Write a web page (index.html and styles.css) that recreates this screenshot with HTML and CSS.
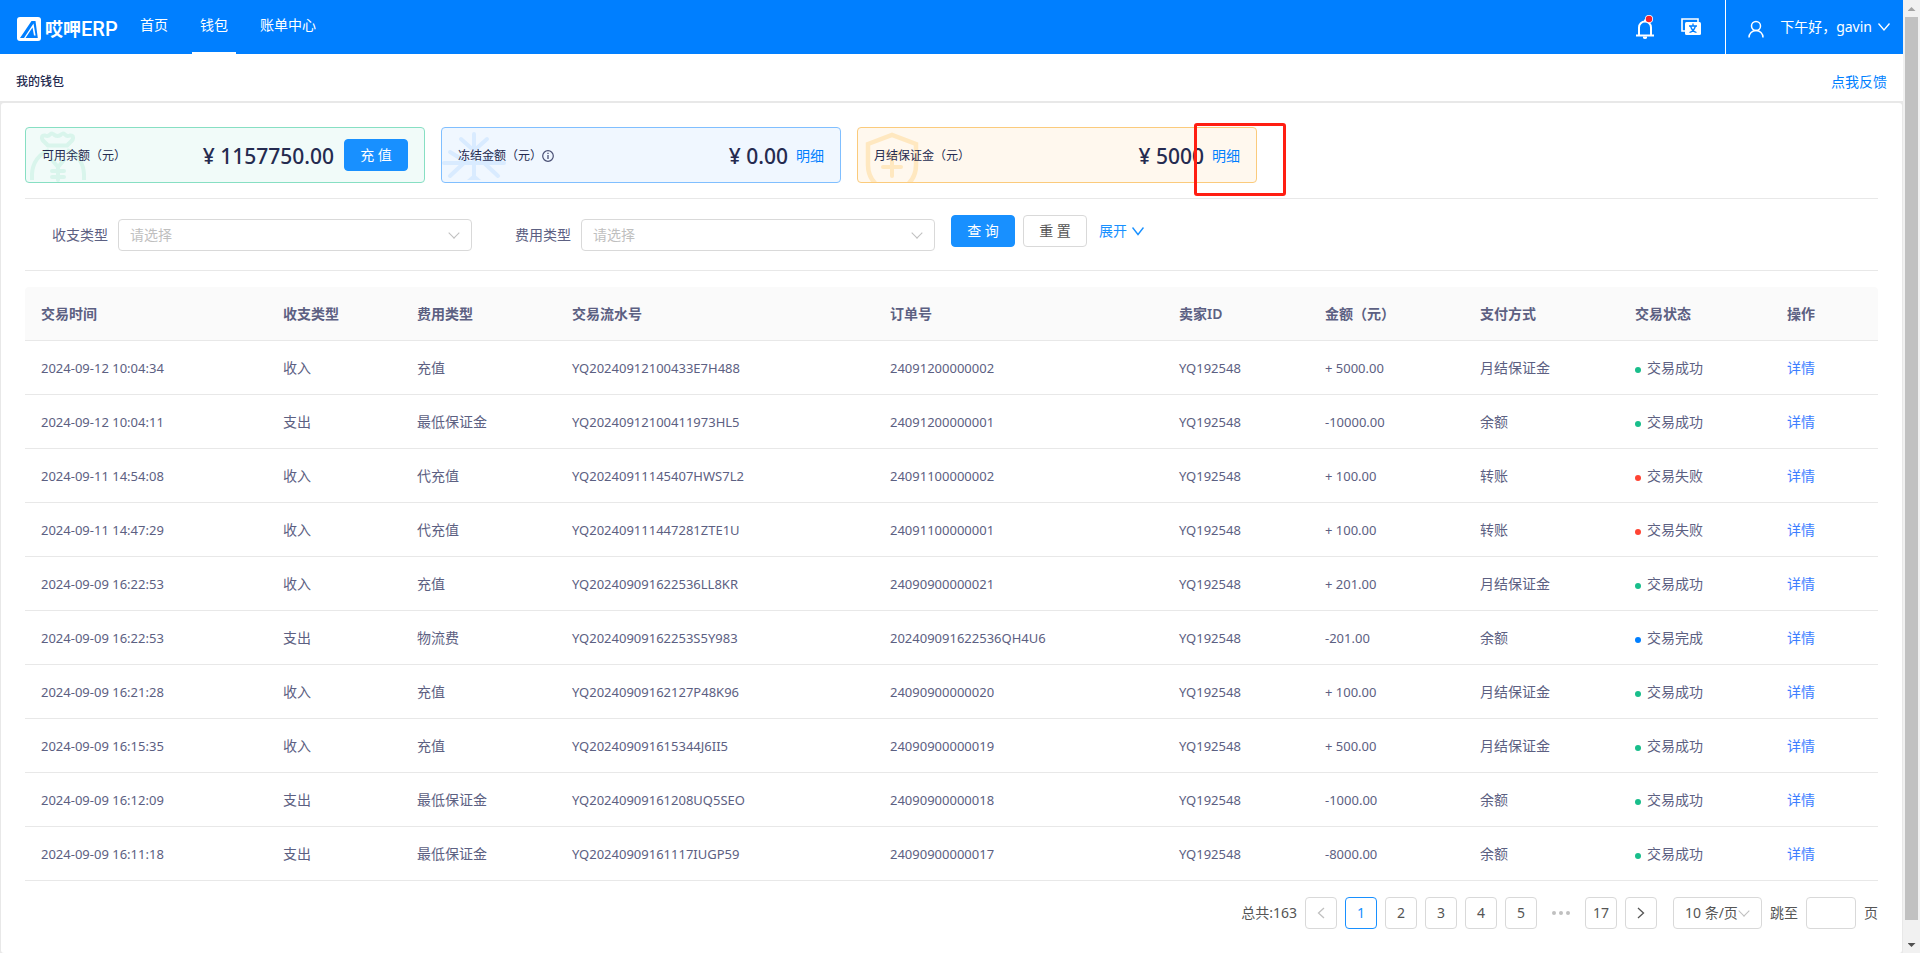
FILE: index.html
```html
<!DOCTYPE html>
<html lang="zh-CN">
<head>
<meta charset="utf-8">
<title>我的钱包</title>
<link rel="stylesheet" href="styles.css">
</head>
<body>
<div class="window">
<div class="app">
  <header class="topbar">
    <div class="logo">
      <svg class="logo-mark" viewBox="0 0 24 24" width="24" height="24"><rect width="24" height="24" rx="3" fill="#fff"/><path d="M3 21 14.500 4H18.500L20.800 21H8.500L15.500 10.500 17 18.500H18.600L16.500 6.500 7 21Z" fill="#007fff" fill-rule="evenodd"/></svg>
      <span class="logo-name">哎呷</span><span class="logo-erp">ERP</span>
    </div>
    <nav class="nav">
      <a class="nav-item" href="#">首页</a>
      <a class="nav-item nav-active" href="#">钱包</a>
      <a class="nav-item" href="#">账单中心</a>
    </nav>
    <div class="tools">
      <button class="tool" aria-label="通知"><svg width="20" height="24" viewBox="0 0 20 24"><path d="M1 20.500H19M4 20V12.500a6 6 0 0 1 12 0V20M10 6.500V4.500" fill="none" stroke="#fff" stroke-width="2"/><path d="M8 21.500h4v1a2 1.500 0 0 1-4 0z" fill="#fff"/><circle cx="14" cy="4" r="4" fill="#fff"/><circle cx="14" cy="4" r="3.200" fill="#f5222d"/></svg></button>
      <button class="tool" aria-label="切换语言"><svg width="20" height="18" viewBox="0 0 20 18"><path d="M4 13H1V1H17V4" fill="none" stroke="#fff" stroke-width="1.600"/><rect x="4" y="4" width="16" height="13" rx="1.500" fill="#fff"/><path d="M12 5.500V7.500M8 8H16M9.500 8C10.500 11.500 12.500 13.500 15.500 14.500M14.500 8C13.500 11.500 11.500 13.500 8.500 14.500" fill="none" stroke="#007fff" stroke-width="1.300"/></svg></button>
    </div>
    <button class="user">
      <svg width="16" height="18" viewBox="0 0 16 18"><circle cx="8" cy="6" r="4.500" fill="none" stroke="#fff" stroke-width="1.500"/><path d="M1 17.500a7 7 0 0 1 14 0" fill="none" stroke="#fff" stroke-width="1.500"/></svg>
      <span class="user-name">下午好，gavin</span>
      <svg class="user-arrow" width="12" height="8" viewBox="0 0 12 8"><path d="M.5.5 6 7 11.500.5" fill="none" stroke="#fff" stroke-width="1.300"/></svg>
    </button>
  </header>
  <div class="crumbs"><h1 class="page-title">我的钱包</h1><a class="feedback" href="#">点我反馈</a></div>
  <main class="panel">
    <section class="cards">
      <div class="card card-green">
        <svg class="card-art" width="64" height="54" viewBox="0 0 64 54"><g fill="none" stroke="#d9f5ec" stroke-width="4" stroke-linecap="round" stroke-linejoin="round"><path d="M22 17.500 16.500 12Q14.500 7 19 7.500 22 9 24 6.500 26.500 4.500 28.500 7 31.500 9 34.500 7 36.500 4.500 39 6.500 41 9 44 7.500 48.500 7 46.500 12L41 17.500Z"/><path d="M6 52V46Q7 29 23 22M58 52V46Q57 29 41 22" stroke-linecap="butt"/><path d="M26 32 32 39 38 32M32 39V52M26 43H38M26 49H38"/></g></svg>
        <span class="card-label">可用余额（元）</span><strong class="amount">¥ 1157750.00</strong>
        <button class="btn btn-primary card-btn">充 值</button>
      </div>
      <div class="card card-blue">
        <svg class="card-art" width="66" height="54" viewBox="0 0 66 54"><path d="M32 6V50M2 35H62M19 11 29 20M45 11 35 20M8 24 26 35M56 24 38 35M8 48 24 33M56 48 40 33" fill="none" stroke="#d9ebff" stroke-width="4" stroke-linecap="round"/><path d="M25 52 32 46 39 52Z" fill="#d9ebff"/></svg>
        <span class="card-label">冻结金额（元）</span>
        <svg class="info" width="12" height="12" viewBox="0 0 12 12"><circle cx="6" cy="6" r="5.300" fill="none" stroke="#4a5075" stroke-width="1.200"/><path d="M6 5V9M6 2.800V4" stroke="#4a5075" stroke-width="1.300"/></svg>
        <strong class="amount">¥ 0.00</strong><a class="detail" href="#">明细</a>
      </div>
      <div class="card card-orange">
        <svg class="card-art" width="64" height="54" viewBox="0 0 64 54"><path d="M10 16 34 7 58 16V37Q58 50 48 58H20Q10 50 10 37Z" fill="none" stroke="#ffe8c0" stroke-width="4.500"/><path d="M28 24 34 30 40 24M34 30V48M25 39H43" fill="none" stroke="#ffe8c0" stroke-width="4" stroke-linecap="round"/></svg>
        <span class="card-label">月结保证金（元）</span><strong class="amount">¥ 5000</strong><a class="detail" href="#">明细</a>
        <span class="highlight"></span>
      </div>
    </section>
    <form class="filters">
      <label class="field"><span>收支类型</span><span class="select-wrap"><select class="select"><option>请选择</option></select></span></label>
      <label class="field"><span>费用类型</span><span class="select-wrap"><select class="select"><option>请选择</option></select></span></label>
      <div class="actions">
        <button type="button" class="btn btn-primary">查 询</button>
        <button type="button" class="btn">重 置</button>
        <a class="expand" href="#">展开<svg width="12" height="9" viewBox="0 0 12 9"><path d="M.5.5 6 7.500 11.500.5" fill="none" stroke="#1890ff" stroke-width="1.400"/></svg></a>
      </div>
    </form>
    <table class="table">
      <colgroup><col class="c-time"><col class="c-dir"><col class="c-mid"><col class="c-serial"><col class="c-order"><col class="c-seller"><col class="c-mid"><col class="c-mid"><col class="c-status"><col class="c-op"></colgroup>
      <thead><tr><th>交易时间</th><th>收支类型</th><th>费用类型</th><th>交易流水号</th><th>订单号</th><th>卖家ID</th><th>金额（元）</th><th>支付方式</th><th>交易状态</th><th>操作</th></tr></thead>
      <tbody>
        <tr><td class="num">2024-09-12 10:04:34</td><td>收入</td><td>充值</td><td class="num">YQ20240912100433E7H488</td><td class="num">24091200000002</td><td class="num">YQ192548</td><td class="num">+ 5000.00</td><td>月结保证金</td><td><span class="status ok">交易成功</span></td><td><a class="row-link" href="#">详情</a></td></tr>
        <tr><td class="num">2024-09-12 10:04:11</td><td>支出</td><td>最低保证金</td><td class="num">YQ20240912100411973HL5</td><td class="num">24091200000001</td><td class="num">YQ192548</td><td class="num">-10000.00</td><td>余额</td><td><span class="status ok">交易成功</span></td><td><a class="row-link" href="#">详情</a></td></tr>
        <tr><td class="num">2024-09-11 14:54:08</td><td>收入</td><td>代充值</td><td class="num">YQ20240911145407HWS7L2</td><td class="num">24091100000002</td><td class="num">YQ192548</td><td class="num">+ 100.00</td><td>转账</td><td><span class="status fail">交易失败</span></td><td><a class="row-link" href="#">详情</a></td></tr>
        <tr><td class="num">2024-09-11 14:47:29</td><td>收入</td><td>代充值</td><td class="num">YQ202409111447281ZTE1U</td><td class="num">24091100000001</td><td class="num">YQ192548</td><td class="num">+ 100.00</td><td>转账</td><td><span class="status fail">交易失败</span></td><td><a class="row-link" href="#">详情</a></td></tr>
        <tr><td class="num">2024-09-09 16:22:53</td><td>收入</td><td>充值</td><td class="num">YQ202409091622536LL8KR</td><td class="num">24090900000021</td><td class="num">YQ192548</td><td class="num">+ 201.00</td><td>月结保证金</td><td><span class="status ok">交易成功</span></td><td><a class="row-link" href="#">详情</a></td></tr>
        <tr><td class="num">2024-09-09 16:22:53</td><td>支出</td><td>物流费</td><td class="num">YQ20240909162253S5Y983</td><td class="num">202409091622536QH4U6</td><td class="num">YQ192548</td><td class="num">-201.00</td><td>余额</td><td><span class="status done">交易完成</span></td><td><a class="row-link" href="#">详情</a></td></tr>
        <tr><td class="num">2024-09-09 16:21:28</td><td>收入</td><td>充值</td><td class="num">YQ20240909162127P48K96</td><td class="num">24090900000020</td><td class="num">YQ192548</td><td class="num">+ 100.00</td><td>月结保证金</td><td><span class="status ok">交易成功</span></td><td><a class="row-link" href="#">详情</a></td></tr>
        <tr><td class="num">2024-09-09 16:15:35</td><td>收入</td><td>充值</td><td class="num">YQ202409091615344J6II5</td><td class="num">24090900000019</td><td class="num">YQ192548</td><td class="num">+ 500.00</td><td>月结保证金</td><td><span class="status ok">交易成功</span></td><td><a class="row-link" href="#">详情</a></td></tr>
        <tr><td class="num">2024-09-09 16:12:09</td><td>支出</td><td>最低保证金</td><td class="num">YQ20240909161208UQ5SEO</td><td class="num">24090900000018</td><td class="num">YQ192548</td><td class="num">-1000.00</td><td>余额</td><td><span class="status ok">交易成功</span></td><td><a class="row-link" href="#">详情</a></td></tr>
        <tr><td class="num">2024-09-09 16:11:18</td><td>支出</td><td>最低保证金</td><td class="num">YQ20240909161117IUGP59</td><td class="num">24090900000017</td><td class="num">YQ192548</td><td class="num">-8000.00</td><td>余额</td><td><span class="status ok">交易成功</span></td><td><a class="row-link" href="#">详情</a></td></tr>
      </tbody>
    </table>
    <div class="pager">
      <span>总共:163</span>
      <button class="page" aria-label="上一页" disabled><svg width="8" height="12" viewBox="0 0 8 12"><path d="M7 1 1.500 6 7 11" fill="none" stroke="#c0c0c0" stroke-width="1.300"/></svg></button>
      <button class="page page-on">1</button><button class="page">2</button><button class="page">3</button><button class="page">4</button><button class="page">5</button>
      <span class="dots"><i></i><i></i><i></i></span>
      <button class="page">17</button>
      <button class="page" aria-label="下一页"><svg width="8" height="12" viewBox="0 0 8 12"><path d="M1 1 6.500 6 1 11" fill="none" stroke="#555" stroke-width="1.300"/></svg></button>
      <span class="select-wrap size-wrap"><select class="select size" aria-label="每页条数"><option>10 条/页</option></select></span>
      <label class="jump">跳至<input class="jump-input" type="text">页</label>
    </div>
  </main>
</div>
<div class="scroll"><i class="up"></i><span class="thumb"></span><i class="down"></i></div>
</div>
</body>
</html>
```
FILE: styles.css
```css
* { box-sizing: border-box; }
body { margin: 0; font: 14px/22px "Noto Sans", "Noto Sans CJK SC", sans-serif; color: #5c6082; background: #fff; }
button, select, input { font: inherit; color: inherit; margin: 0; }
a { text-decoration: none; color: #007fff; }
svg { display: block; flex: none; }
.window { display: flex; min-height: 100vh; }
.app { flex: 1; min-width: 0; display: flex; flex-direction: column; background: #e8e8e8; }

.topbar { display: flex; height: 54px; background: #007fff; color: #fff; }
.logo { display: flex; align-items: center; width: 132px; padding: 4px 0 0 17px; white-space: nowrap; }
.logo-mark { margin-right: 4px; }
.logo-name { font-size: 18px; font-weight: 700; }
.logo-erp { font: 500 20px/22px Roboto, sans-serif; }
.nav { display: flex; gap: 16px; }
.nav-item { padding: 14px 8px 16px; color: #fff; }
.nav-active { border-bottom: 2px solid #fff; }
.tools { display: flex; align-items: center; gap: 26px; margin-left: auto; padding-right: 24px; }
.tool { padding: 0; border: 0; background: none; }
.user { display: flex; align-items: center; padding: 0 13px 0 22px; border: 0; border-left: 1px solid #fff; background: none; color: #fff; }
.user svg { margin-top: 4px; }
.user-name { margin: 0 6px 0 16px; }
.user .user-arrow { margin-top: 0; }

.crumbs { display: flex; align-items: center; justify-content: space-between; height: 47px; margin-bottom: 2px; padding: 8px 16px 0; background: #fff; }
.page-title { margin: 0; font-size: 12px; font-weight: 500; color: #252b50; }

.panel { flex: 1; margin: 0 1px; padding: 24px 24px 16px; border-radius: 3px; background: #fff; }
.cards { display: flex; gap: 16px; padding-bottom: 15px; border-bottom: 1px solid #e8e8e8; }
.card { position: relative; display: flex; align-items: center; width: 400px; height: 56px; padding: 2px 16px 0; border: 1px solid; border-radius: 4px; }
.card-green { border-color: #87dfc3; background: #f1fbf9; }
.card-blue { border-color: #80bfff; background: #f0f7ff; }
.card-orange { border-color: #fbcb7c; background: #fff8ee; }
.card-art { position: absolute; left: 0; top: 0; }
.card-label { position: relative; font-size: 12px; color: #252b50; }
.amount { margin-left: auto; font-size: 21px; font-weight: 500; color: #252b50; }
.detail { margin-left: 8px; }
.card-btn { margin: 0 0 2px 10px; }
.highlight { position: absolute; left: 336px; top: -5px; width: 92px; height: 73px; border: 3px solid #ff1e12; border-radius: 3px; }

.btn { width: 64px; height: 32px; padding: 0; border: 1px solid #d9d9d9; border-radius: 4px; background: #fff; color: #555; }
.btn-primary { border-color: #1890ff; background: #1890ff; color: #fff; }
.filters { display: flex; align-items: flex-start; height: 72px; padding-top: 16px; border-bottom: 1px solid #e8e8e8; }
.field { display: flex; align-items: center; gap: 10px; margin-top: 4px; padding-left: 27px; }
.field + .field { padding-left: 43px; }
.select-wrap { position: relative; display: block; width: 354px; }
.select-wrap::after { content: ""; position: absolute; right: 14px; top: 10px; width: 7px; height: 7px; border: solid #bfbfbf; border-width: 0 1px 1px 0; transform: rotate(45deg); pointer-events: none; }
.select { display: block; width: 100%; height: 32px; padding: 0 11px; border: 1px solid #d9d9d9; border-radius: 4px; background: #fff; color: #bfbfbf; appearance: none; }
.actions { display: flex; align-items: center; gap: 8px; margin-left: 16px; }
.expand { display: flex; align-items: center; gap: 5px; margin-left: 4px; color: #1890ff; }

.table { width: 100%; margin-top: 16px; table-layout: fixed; border-collapse: separate; border-spacing: 0; }
.c-time { width: 242px; } .c-dir { width: 134px; } .c-mid { width: 155px; } .c-serial { width: 318px; } .c-order { width: 289px; }
.c-seller { width: 146px; } .c-status { width: 152px; } .c-op { width: 107px; }
.table th, .table td { height: 54px; padding: 0 16px; border-bottom: 1px solid #e8e8e8; text-align: left; white-space: nowrap; }
.table th { background: #fafafa; font-weight: 600; }
.table th:first-child { border-top-left-radius: 4px; }
.table th:last-child { border-top-right-radius: 4px; }
.table .num { font-size: 13px; }
.status { display: flex; align-items: center; gap: 6px; }
.status::before { content: ""; width: 6px; height: 6px; margin-top: 4px; border-radius: 50%; background: #19be8b; }
.fail::before { background: #ff4433; }
.done::before { background: #007fff; }
.row-link { color: #3d7eff; }

.pager { display: flex; align-items: center; justify-content: flex-end; gap: 8px; padding-top: 16px; color: #555; }
.page { display: flex; align-items: center; justify-content: center; width: 32px; height: 32px; padding: 0; border: 1px solid #d9d9d9; border-radius: 4px; background: #fff; }
.page-on { border-color: #1890ff; color: #1890ff; }
.dots { display: flex; justify-content: center; gap: 3px; width: 32px; }
.dots i { width: 4px; height: 4px; border-radius: 50%; background: #c0c0c0; }
.size-wrap { width: 89px; margin-left: 8px; }
.size { color: #555; }
.jump { display: flex; align-items: center; gap: 8px; }
.jump-input { width: 50px; height: 32px; border: 1px solid #d9d9d9; border-radius: 4px; }

.scroll { display: flex; flex-direction: column; align-items: center; width: 17px; background: #f1f1f1; }
.scroll i { width: 8px; height: 4px; margin: 7px 0 6px; background: #a3a3a3; clip-path: polygon(50% 0, 100% 100%, 0 100%); }
.scroll .down { background: #505050; clip-path: polygon(0 0, 100% 0, 50% 100%); }
.thumb { flex: 1; width: 13px; margin-bottom: 16px; background: #c1c1c1; }
```
